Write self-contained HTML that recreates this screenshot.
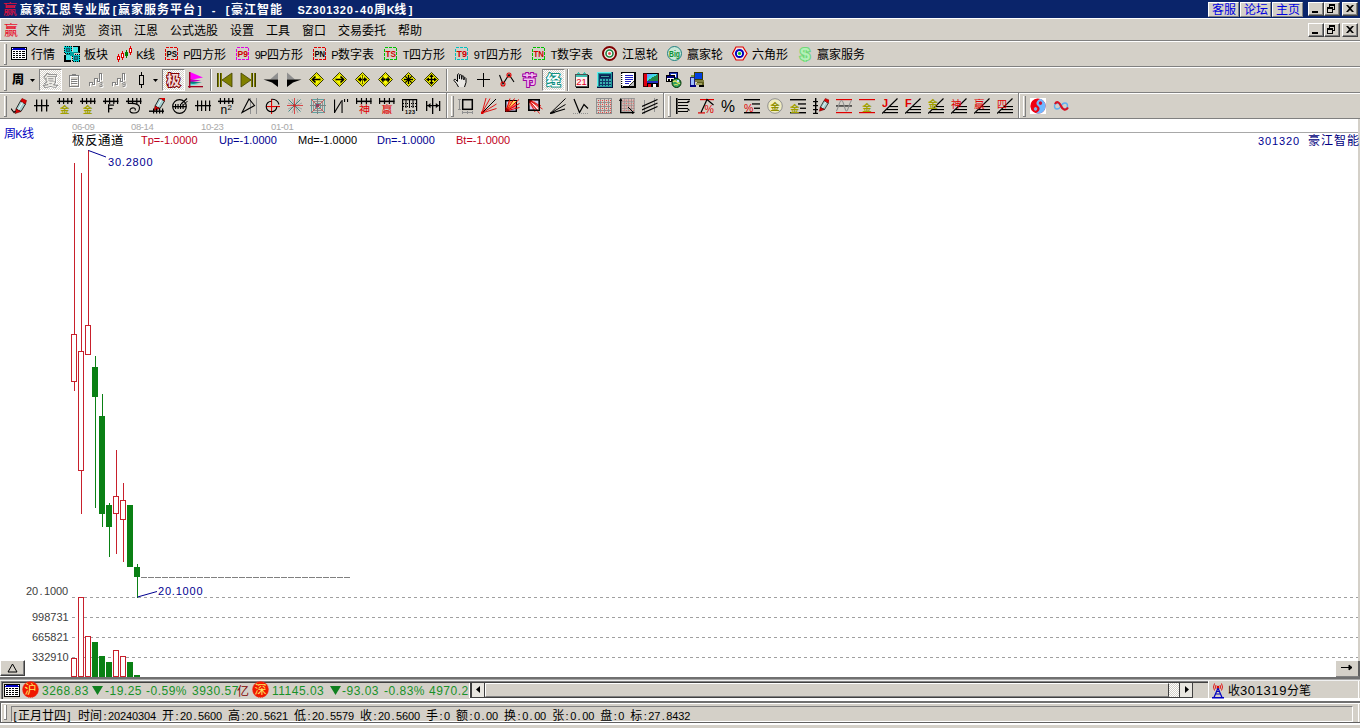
<!DOCTYPE html>
<html lang="zh"><head><meta charset="utf-8"><title>赢家江恩专业版</title>
<style>
html,body{margin:0;padding:0}
body{width:1360px;height:728px;overflow:hidden;position:relative;background:#d4d0c8;
 font-family:"Liberation Sans","Noto Sans CJK SC",sans-serif;font-size:12px;line-height:12px;color:#000}
div,span,svg{position:absolute;box-sizing:border-box}
.t{white-space:pre;height:14px;line-height:14px}
.t span{position:static}
.d{font-size:11px;letter-spacing:-0.12px}
.n{font-size:11px}
.db{font-size:11px;letter-spacing:0.88px}
.t span.s{display:inline-block;width:6px;text-align:center;font-size:11px}
.t span.sb{display:inline-block;width:7px;text-align:center;font-size:11px}
.cb{letter-spacing:1px}
.b{font-weight:bold}
.hl{background:#fff}.sh{background:#808080}.dk{background:#404040}
.btn{background:#d4d0c8;border:1px solid;border-color:#fff #404040 #404040 #fff;box-shadow:inset -1px -1px 0 #808080}
.sunk{border:1px solid;border-color:#808080 #fff #fff #808080}
.chk{background-color:#fff;background-image:linear-gradient(45deg,#d4d0c8 25%,transparent 25%,transparent 75%,#d4d0c8 75%),linear-gradient(45deg,#d4d0c8 25%,transparent 25%,transparent 75%,#d4d0c8 75%);background-size:2px 2px;background-position:0 0,1px 1px;border:1px solid;border-color:#808080 #fff #fff #808080}
</style></head>
<body>
<div style="left:0px;top:0px;width:1360px;height:18px;background:#0a246a;"></div>
<div class="t" style="left:3px;top:2px;color:#e0103c;font-size:14px;width:14px">赢</div>
<div class="t b" style="left:20px;top:3px;color:#fff;"><span class="cb">赢家江恩专业版</span><span class="sb">[</span><span class="cb">赢家服务平台</span><span class="sb">]</span><span class="sb"> </span><span class="sb">-</span><span class="sb"> </span><span class="sb">[</span><span class="cb">豪江智能</span><span class="sb"> </span><span class="sb"> </span><span class="n" style="letter-spacing:0.66px;margin:0 -0.33px 0 0.33px">SZ301320</span><span class="sb">-</span><span class="db">40</span><span class="cb">周</span><span class="n" style="letter-spacing:-0.94px;margin:0 0.47px 0 -0.47px">K</span><span class="cb">线</span><span class="sb">]</span></div>
<div style="left:1208px;top:2px;width:31px;height:15px;background:#d4d0c8;border:1px solid;border-color:#fff #808080 #808080 #fff"></div>
<div class="t" style="left:1212px;top:3px;color:#0000e0;">客服</div>
<div style="left:1240px;top:2px;width:31px;height:15px;background:#d4d0c8;border:1px solid;border-color:#fff #808080 #808080 #fff"></div>
<div class="t" style="left:1244px;top:3px;color:#0000e0;">论坛</div>
<div style="left:1272px;top:2px;width:31px;height:15px;background:#d4d0c8;border:1px solid;border-color:#fff #808080 #808080 #fff"></div>
<div class="t" style="left:1276px;top:3px;color:#0000e0;">主页</div>
<div class="btn" style="left:1308px;top:2px;width:16px;height:14px"><div style="left:3px;top:8px;width:6px;height:2px;background:#000"></div></div>
<div class="btn" style="left:1324px;top:2px;width:16px;height:14px"><div style="left:4px;top:1px;width:6px;height:6px;border:1px solid #000;border-top-width:2px"></div><div style="left:2px;top:4px;width:6px;height:6px;border:1px solid #000;border-top-width:2px;background:#d4d0c8"></div></div>
<div class="btn" style="left:1342px;top:2px;width:16px;height:14px"><svg style="left:3px;top:2px" width="8" height="7" viewBox="0 0 8 7"><path d="M0 0h2l2 2 2-2h2l-3 3.5 3 3.5h-2l-2-2-2 2h-2l3-3.5z" fill="#000"/></svg></div>
<div style="left:0px;top:18px;width:1360px;height:1px;background:#fff;"></div>
<div style="left:0px;top:19px;width:1px;height:22px;background:#fff;"></div>
<div class="t" style="left:4px;top:22px;color:#e8102c;font-size:14px;width:14px;height:16px;line-height:16px">赢</div>
<div class="t" style="left:26px;top:24px;color:#000;">文件</div>
<div class="t" style="left:62px;top:24px;color:#000;">浏览</div>
<div class="t" style="left:98px;top:24px;color:#000;">资讯</div>
<div class="t" style="left:134px;top:24px;color:#000;">江恩</div>
<div class="t" style="left:170px;top:24px;color:#000;">公式选股</div>
<div class="t" style="left:230px;top:24px;color:#000;">设置</div>
<div class="t" style="left:266px;top:24px;color:#000;">工具</div>
<div class="t" style="left:302px;top:24px;color:#000;">窗口</div>
<div class="t" style="left:338px;top:24px;color:#000;">交易委托</div>
<div class="t" style="left:398px;top:24px;color:#000;">帮助</div>
<div class="btn" style="left:1308px;top:23px;width:16px;height:14px"><div style="left:3px;top:8px;width:6px;height:2px;background:#000"></div></div>
<div class="btn" style="left:1324px;top:23px;width:16px;height:14px"><div style="left:4px;top:1px;width:6px;height:6px;border:1px solid #000;border-top-width:2px"></div><div style="left:2px;top:4px;width:6px;height:6px;border:1px solid #000;border-top-width:2px;background:#d4d0c8"></div></div>
<div class="btn" style="left:1342px;top:23px;width:16px;height:14px"><svg style="left:3px;top:2px" width="8" height="7" viewBox="0 0 8 7"><path d="M0 0h2l2 2 2-2h2l-3 3.5 3 3.5h-2l-2-2-2 2h-2l3-3.5z" fill="#000"/></svg></div>
<div style="left:0px;top:40px;width:1360px;height:1px;background:#808080;"></div>
<div style="left:0px;top:41px;width:1360px;height:1px;background:#fff;"></div>
<div style="left:0px;top:66px;width:1360px;height:1px;background:#808080;"></div>
<div style="left:0px;top:67px;width:1360px;height:1px;background:#fff;"></div>
<div style="left:0px;top:92px;width:1360px;height:1px;background:#808080;"></div>
<div style="left:0px;top:93px;width:1360px;height:1px;background:#fff;"></div>
<div style="left:0px;top:118px;width:1360px;height:1px;background:#808080;"></div>
<div style="left:4px;top:44px;width:1px;height:20px;background:#fff;"></div>
<div style="left:5px;top:44px;width:1px;height:20px;background:#d4d0c8;"></div>
<div style="left:6px;top:44px;width:1px;height:20px;background:#808080;"></div>
<div style="left:4px;top:64px;width:3px;height:1px;background:#808080;"></div>
<svg style="left:11px;top:46px" width="16" height="16" viewBox="0 0 16 16" shape-rendering="crispEdges"><rect x="0.5" y="1.5" width="15" height="12" fill="#fff" stroke="#000" stroke-width="1" /><rect x="1" y="2" width="14" height="2" fill="#0000c0"/><rect x="1" y="2" width="1" height="1" fill="#fff"/><rect x="14" y="2" width="1" height="1" fill="#fff"/><rect x="2" y="5" width="2" height="1" fill="#000"/><rect x="5" y="5" width="2" height="1" fill="#000"/><rect x="8" y="5" width="2" height="1" fill="#000"/><rect x="11" y="5" width="3" height="1" fill="#000"/><rect x="2" y="7" width="2" height="1" fill="#000"/><rect x="5" y="7" width="2" height="1" fill="#000"/><rect x="8" y="7" width="2" height="1" fill="#000"/><rect x="11" y="7" width="3" height="1" fill="#000"/><rect x="2" y="9" width="2" height="1" fill="#000"/><rect x="5" y="9" width="2" height="1" fill="#000"/><rect x="8" y="9" width="2" height="1" fill="#000"/><rect x="11" y="9" width="3" height="1" fill="#000"/><rect x="2" y="11" width="2" height="1" fill="#000"/><rect x="5" y="11" width="2" height="1" fill="#000"/><rect x="8" y="11" width="2" height="1" fill="#000"/><rect x="11" y="11" width="3" height="1" fill="#000"/></svg>
<div class="t" style="left:31px;top:48px;color:#000;">行情</div>
<svg style="left:64px;top:46px" width="16" height="16" viewBox="0 0 16 16" shape-rendering="crispEdges"><rect x="0" y="0" width="16" height="16" fill="#00d8d8"/><rect x="7" y="0" width="2" height="16" fill="#d4d0c8"/><rect x="0" y="7" width="16" height="2" fill="#d4d0c8"/><rect x="0.5" y="0.5" width="7" height="7" fill="#00c8c8" stroke="#000" stroke-width="1" stroke-dasharray="1 1"/><rect x="2.5" y="2.5" width="3" height="3" fill="#208890" stroke="#106070" stroke-width="1" /><rect x="8.5" y="8.5" width="7" height="7" fill="#00c8c8" stroke="#000" stroke-width="1" stroke-dasharray="1 1"/><rect x="10.5" y="10.5" width="3" height="3" fill="#208890" stroke="#106070" stroke-width="1" /><rect x="9" y="1" width="5" height="5" fill="#40e8e8"/><rect x="9" y="0" width="7" height="1" fill="#000"/><rect x="14" y="0" width="2" height="7" fill="#000"/><rect x="9" y="6" width="6" height="1" fill="#008080"/><rect x="2" y="9" width="5" height="5" fill="#40e8e8"/><rect x="0" y="9" width="2" height="7" fill="#000"/><rect x="0" y="14" width="7" height="2" fill="#000"/><rect x="2" y="8" width="5" height="1" fill="#008080"/><rect x="6" y="6" width="4" height="4" fill="#00a0a0"/></svg>
<div class="t" style="left:84px;top:48px;color:#000;">板块</div>
<svg style="left:116px;top:46px" width="16" height="16" viewBox="0 0 16 16" shape-rendering="crispEdges"><rect x="2" y="8" width="1" height="8" fill="#e00000"/><rect x="1.5" y="10.5" width="2" height="3" fill="#fff" stroke="#e00000" stroke-width="1" /><rect x="6" y="5" width="1" height="9" fill="#e00000"/><rect x="5.5" y="7.5" width="2" height="4" fill="#fff" stroke="#e00000" stroke-width="1" /><rect x="10" y="4" width="1" height="8" fill="#008000"/><rect x="9" y="6" width="3" height="4" fill="#008000"/><rect x="14" y="0" width="1" height="9" fill="#e00000"/><rect x="13.5" y="2.5" width="2" height="4" fill="#fff" stroke="#e00000" stroke-width="1" /></svg>
<div class="t" style="left:137px;top:48px;color:#000;"><span class="n" style="letter-spacing:-1.34px;margin:0 0.67px 0 -0.67px">K</span>线</div>
<svg style="left:164px;top:46px" width="16" height="16" viewBox="0 0 16 16" shape-rendering="crispEdges"><rect x="1.5" y="1.5" width="12" height="12" fill="none" stroke="#e00000" stroke-dasharray="3 1"/><text x="2.5" y="11" fill="#000" font-size="9" font-family="Liberation Sans,Noto Sans CJK SC,sans-serif" font-weight="bold" textLength="10.5" lengthAdjust="spacingAndGlyphs" shape-rendering="geometricPrecision">PS</text></svg>
<div class="t" style="left:184px;top:48px;color:#000;"><span class="n" style="letter-spacing:-1.34px;margin:0 0.67px 0 -0.67px">P</span>四方形</div>
<svg style="left:235px;top:46px" width="16" height="16" viewBox="0 0 16 16" shape-rendering="crispEdges"><rect x="1.5" y="1.5" width="12" height="12" fill="none" stroke="#e000e0" stroke-dasharray="3 1"/><text x="2.5" y="11" fill="#d00000" font-size="9" font-family="Liberation Sans,Noto Sans CJK SC,sans-serif" font-weight="bold" textLength="10.5" lengthAdjust="spacingAndGlyphs" shape-rendering="geometricPrecision">P9</text></svg>
<div class="t" style="left:255px;top:48px;color:#000;"><span class="n" style="letter-spacing:-0.73px;margin:0 0.36px 0 -0.36px">9P</span>四方形</div>
<svg style="left:312px;top:46px" width="16" height="16" viewBox="0 0 16 16" shape-rendering="crispEdges"><rect x="1.5" y="1.5" width="12" height="12" fill="none" stroke="#e00000" stroke-dasharray="3 1"/><text x="2.5" y="11" fill="#000" font-size="9" font-family="Liberation Sans,Noto Sans CJK SC,sans-serif" font-weight="bold" textLength="10.5" lengthAdjust="spacingAndGlyphs" shape-rendering="geometricPrecision">PN</text></svg>
<div class="t" style="left:332px;top:48px;color:#000;"><span class="n" style="letter-spacing:-1.34px;margin:0 0.67px 0 -0.67px">P</span>数字表</div>
<svg style="left:383px;top:46px" width="16" height="16" viewBox="0 0 16 16" shape-rendering="crispEdges"><rect x="1.5" y="1.5" width="12" height="12" fill="none" stroke="#00c000" stroke-dasharray="3 1"/><text x="2.5" y="11" fill="#d00000" font-size="9" font-family="Liberation Sans,Noto Sans CJK SC,sans-serif" font-weight="bold" textLength="10.5" lengthAdjust="spacingAndGlyphs" shape-rendering="geometricPrecision">TS</text></svg>
<div class="t" style="left:403px;top:48px;color:#000;"><span class="n" style="letter-spacing:-0.72px;margin:0 0.36px 0 -0.36px">T</span>四方形</div>
<svg style="left:454px;top:46px" width="16" height="16" viewBox="0 0 16 16" shape-rendering="crispEdges"><rect x="1.5" y="1.5" width="12" height="12" fill="none" stroke="#00c0c0" stroke-dasharray="3 1"/><text x="2.5" y="11" fill="#d00000" font-size="9" font-family="Liberation Sans,Noto Sans CJK SC,sans-serif" font-weight="bold" textLength="10.5" lengthAdjust="spacingAndGlyphs" shape-rendering="geometricPrecision">T9</text></svg>
<div class="t" style="left:474px;top:48px;color:#000;"><span class="n" style="letter-spacing:-0.42px;margin:0 0.21px 0 -0.21px">9T</span>四方形</div>
<svg style="left:531px;top:46px" width="16" height="16" viewBox="0 0 16 16" shape-rendering="crispEdges"><rect x="1.5" y="1.5" width="12" height="12" fill="none" stroke="#00c000" stroke-dasharray="3 1"/><text x="2.5" y="11" fill="#d00000" font-size="9" font-family="Liberation Sans,Noto Sans CJK SC,sans-serif" font-weight="bold" textLength="10.5" lengthAdjust="spacingAndGlyphs" shape-rendering="geometricPrecision">TN</text></svg>
<div class="t" style="left:551px;top:48px;color:#000;"><span class="n" style="letter-spacing:-0.72px;margin:0 0.36px 0 -0.36px">T</span>数字表</div>
<svg style="left:602px;top:46px" width="16" height="16" viewBox="0 0 16 16"><circle cx="7.5" cy="7.5" r="6.5" fill="#f4f0ec" stroke="#800000" stroke-width="2"/><circle cx="7.5" cy="7.5" r="3.5" fill="#fff" stroke="#208040" stroke-width="1.6"/><circle cx="7.5" cy="7.5" r="1.2" fill="#e04040" stroke="#e04040" stroke-width="0.5"/></svg>
<div class="t" style="left:622px;top:48px;color:#000;">江恩轮</div>
<svg style="left:667px;top:46px" width="16" height="16" viewBox="0 0 16 16"><circle cx="7.5" cy="7.5" r="7" fill="#c8e8d8" stroke="#208080" stroke-width="1"/><text x="2" y="11" fill="#109030" font-size="8.5" font-family="Liberation Sans,Noto Sans CJK SC,sans-serif" font-weight="bold" textLength="11" lengthAdjust="spacingAndGlyphs">Big</text></svg>
<div class="t" style="left:687px;top:48px;color:#000;">赢家轮</div>
<svg style="left:732px;top:46px" width="16" height="16" viewBox="0 0 16 16"><polygon points="4,1 11,1 15,7.5 11,14 4,14 0.5,7.5" fill="#f0e8e8" stroke="#e00000" stroke-width="1.2" /><circle cx="7.5" cy="7.5" r="3.6" fill="#fff" stroke="#0000c0" stroke-width="2"/><circle cx="7.5" cy="7.5" r="1.3" fill="#00c000" stroke="#00a000" stroke-width="0.5"/></svg>
<div class="t" style="left:752px;top:48px;color:#000;">六角形</div>
<svg style="left:797px;top:46px" width="16" height="16" viewBox="0 0 16 16"><text x="3" y="14" font-size="17" font-weight="bold" font-family="Liberation Sans,sans-serif" fill="#b4f0b8" stroke="#70d878" stroke-width="2.2" paint-order="stroke" textLength="10" lengthAdjust="spacingAndGlyphs">$</text></svg>
<div class="t" style="left:817px;top:48px;color:#000;">赢家服务</div>
<div style="left:4px;top:70px;width:1px;height:20px;background:#fff;"></div>
<div style="left:5px;top:70px;width:1px;height:20px;background:#d4d0c8;"></div>
<div style="left:6px;top:70px;width:1px;height:20px;background:#808080;"></div>
<div style="left:4px;top:90px;width:3px;height:1px;background:#808080;"></div>
<div class="t" style="left:12px;top:73px;font-weight:900;font-size:12px">周</div>
<svg style="left:30px;top:79px" width="5" height="3" viewBox="0 0 5 3"><path d="M0 0h5l-2.5 3z" fill="#000"/></svg>
<div class="chk" style="left:39px;top:69px;width:23px;height:22px"></div>
<div class="chk" style="left:162px;top:69px;width:23px;height:22px"></div>
<div class="chk" style="left:542px;top:69px;width:23px;height:22px"></div>
<svg style="left:43px;top:72px" width="16" height="16" viewBox="0 0 16 16"><g style="filter:drop-shadow(1px 1px 0 #fff)"><text x="1" y="12.5" font-size="13" font-weight="bold" font-family="Liberation Sans,Noto Sans CJK SC,sans-serif" fill="#f0eee8" stroke="#808080" stroke-width="1.6" paint-order="stroke">复</text></g></svg>
<svg style="left:66px;top:72px" width="16" height="16" viewBox="0 0 16 16" shape-rendering="crispEdges"><g transform="translate(1,1)"><rect x="3.5" y="3.5" width="9" height="11" fill="none" stroke="#fff" stroke-width="1" /><rect x="6" y="2" width="4" height="2" fill="#fff"/><rect x="5" y="7" width="6" height="1" fill="#fff"/><rect x="5" y="9" width="6" height="1" fill="#fff"/><rect x="5" y="11" width="6" height="1" fill="#fff"/></g><g transform="translate(0,0)"><rect x="3.5" y="3.5" width="9" height="11" fill="none" stroke="#808080" stroke-width="1" /><rect x="6" y="2" width="4" height="2" fill="#808080"/><rect x="5" y="7" width="6" height="1" fill="#808080"/><rect x="5" y="9" width="6" height="1" fill="#808080"/><rect x="5" y="11" width="6" height="1" fill="#808080"/></g></svg>
<svg style="left:89px;top:72px" width="16" height="16" viewBox="0 0 16 16" shape-rendering="crispEdges"><g style="filter:drop-shadow(1px 1px 0 #fff)"><polyline points="0.5,14 0.5,10.5 3.5,10.5 3.5,12.5 5.5,12.5 5.5,6.5 8.5,6.5 8.5,9.5 10.5,9.5 10.5,1.5 12.5,1.5 12.5,8" fill="none" stroke="#808080" stroke-width="1" /><text x="10" y="15" fill="#808080" font-size="7" font-family="Liberation Sans,Noto Sans CJK SC,sans-serif" font-weight="bold" shape-rendering="geometricPrecision">3</text></g></svg>
<svg style="left:112px;top:72px" width="16" height="16" viewBox="0 0 16 16" shape-rendering="crispEdges"><g style="filter:drop-shadow(1px 1px 0 #fff)"><polyline points="0.5,14 0.5,10.5 3.5,10.5 3.5,12.5 5.5,12.5 5.5,6.5 8.5,6.5 8.5,9.5 10.5,9.5 10.5,1.5 12.5,1.5 12.5,8" fill="none" stroke="#808080" stroke-width="1" /><text x="10" y="15" fill="#808080" font-size="7" font-family="Liberation Sans,Noto Sans CJK SC,sans-serif" font-weight="bold" shape-rendering="geometricPrecision">9</text></g></svg>
<svg style="left:135px;top:72px" width="16" height="16" viewBox="0 0 16 16" shape-rendering="crispEdges"><rect x="6" y="0" width="1" height="3" fill="#000"/><rect x="4.5" y="3.5" width="4" height="9" fill="none" stroke="#000" stroke-width="1" /><rect x="4.5" y="3.5" width="4" height="9" fill="none" stroke="#000" stroke-width="1" /><rect x="6" y="13" width="1" height="3" fill="#000"/><rect x="5" y="3" width="1" height="1" fill="#000"/></svg>
<svg style="left:166px;top:72px" width="16" height="16" viewBox="0 0 16 16"><text x="0.5" y="13" font-size="14" font-weight="bold" font-family="Liberation Sans,Noto Sans CJK SC,sans-serif" fill="#f4dcdc" stroke="#800000" stroke-width="2" paint-order="stroke">极</text></svg>
<svg style="left:188px;top:72px" width="16" height="16" viewBox="0 0 16 16"><polygon points="2,0 15,5.5 2,8" fill="#ff00ff" stroke="none" stroke-width="1" /><polygon points="2,7 13,8.5 2,10.5" fill="#c000c0" stroke="none" stroke-width="1" /><polygon points="2,9.5 14,10.5 2,12.5" fill="#008080" stroke="none" stroke-width="1" /><polygon points="2,11.5 11,12.5 2,13.5" fill="#60e0e0" stroke="none" stroke-width="1" /><rect x="1" y="0" width="1.4" height="16" fill="#a00020"/><rect x="0" y="14" width="15" height="1.3" fill="#a00020"/></svg>
<svg style="left:217px;top:72px" width="16" height="16" viewBox="0 0 16 16" shape-rendering="crispEdges"><rect x="0" y="1" width="2" height="14" fill="#808000"/><rect x="0" y="1" width="1" height="14" fill="#404000"/><rect x="3" y="1" width="2" height="14" fill="#808000"/><rect x="3" y="1" width="1" height="14" fill="#404000"/><polygon points="15,1 15,15 5,8" fill="#808000" stroke="#404000" stroke-width="0.8" shape-rendering="geometricPrecision"/></svg>
<svg style="left:240px;top:72px" width="16" height="16" viewBox="0 0 16 16" shape-rendering="crispEdges"><rect x="14" y="1" width="2" height="14" fill="#808000"/><rect x="15" y="1" width="1" height="14" fill="#404000"/><rect x="11" y="1" width="2" height="14" fill="#808000"/><rect x="12" y="1" width="1" height="14" fill="#404000"/><polygon points="1,1 1,15 11,8" fill="#808000" stroke="#404000" stroke-width="0.8" shape-rendering="geometricPrecision"/></svg>
<svg style="left:263px;top:72px" width="16" height="16" viewBox="0 0 16 16"><polygon points="7,7.5 15,0.5 15,7.5" fill="#909090" stroke="none" stroke-width="1" /><polygon points="0.5,7.5 15,7.5 15,15 9,10.5" fill="#000" stroke="none" stroke-width="1" /></svg>
<svg style="left:286px;top:72px" width="16" height="16" viewBox="0 0 16 16"><polygon points="9,7.5 1,0.5 1,7.5" fill="#909090" stroke="none" stroke-width="1" /><polygon points="15.5,7.5 1,7.5 1,15 7,10.5" fill="#000" stroke="none" stroke-width="1" /></svg>
<svg style="left:309px;top:72px" width="16" height="16" viewBox="0 0 16 16"><polygon points="7.5,0.5 14.5,7.5 7.5,14.5 0.5,7.5" fill="#ffff00" stroke="#303000" stroke-width="1" /><polygon points="7.5,2.2 12.8,7.5 7.5,12.8 2.2,7.5" fill="none" stroke="#808000" stroke-width="0.5" /><line x1="3.5" y1="7.5" x2="11.5" y2="7.5" stroke="#000" stroke-width="1.6" /><polyline points="6.5,4.5 3.5,7.5 6.5,10.5" fill="none" stroke="#000" stroke-width="1.6" /></svg>
<svg style="left:332px;top:72px" width="16" height="16" viewBox="0 0 16 16"><polygon points="7.5,0.5 14.5,7.5 7.5,14.5 0.5,7.5" fill="#ffff00" stroke="#303000" stroke-width="1" /><polygon points="7.5,2.2 12.8,7.5 7.5,12.8 2.2,7.5" fill="none" stroke="#808000" stroke-width="0.5" /><line x1="3.5" y1="7.5" x2="11.5" y2="7.5" stroke="#000" stroke-width="1.6" /><polyline points="8.5,4.5 11.5,7.5 8.5,10.5" fill="none" stroke="#000" stroke-width="1.6" /></svg>
<svg style="left:355px;top:72px" width="16" height="16" viewBox="0 0 16 16"><polygon points="7.5,0.5 14.5,7.5 7.5,14.5 0.5,7.5" fill="#ffff00" stroke="#303000" stroke-width="1" /><polygon points="7.5,2.2 12.8,7.5 7.5,12.8 2.2,7.5" fill="none" stroke="#808000" stroke-width="0.5" /><line x1="3.5" y1="7.5" x2="11.5" y2="7.5" stroke="#000" stroke-width="1.6" /><polygon points="3,7.5 6,5 6,10" fill="#000" stroke="none" stroke-width="1" /><polygon points="12,7.5 9,5 9,10" fill="#000" stroke="none" stroke-width="1" /><rect x="7" y="3" width="1" height="9" fill="#606000"/></svg>
<svg style="left:378px;top:72px" width="16" height="16" viewBox="0 0 16 16"><polygon points="7.5,0.5 14.5,7.5 7.5,14.5 0.5,7.5" fill="#ffff00" stroke="#303000" stroke-width="1" /><polygon points="7.5,2.2 12.8,7.5 7.5,12.8 2.2,7.5" fill="none" stroke="#808000" stroke-width="0.5" /><line x1="3" y1="7.5" x2="12" y2="7.5" stroke="#000" stroke-width="1.6" /><polygon points="7,7.5 4,5 4,10" fill="#000" stroke="none" stroke-width="1" /><polygon points="8,7.5 11,5 11,10" fill="#000" stroke="none" stroke-width="1" /><line x1="4.5" y1="4.5" x2="10.5" y2="10.5" stroke="#404000" stroke-width="0.8" /><line x1="10.5" y1="4.5" x2="4.5" y2="10.5" stroke="#404000" stroke-width="0.8" /></svg>
<svg style="left:401px;top:72px" width="16" height="16" viewBox="0 0 16 16"><polygon points="7.5,0.5 14.5,7.5 7.5,14.5 0.5,7.5" fill="#ffff00" stroke="#303000" stroke-width="1" /><polygon points="7.5,2.2 12.8,7.5 7.5,12.8 2.2,7.5" fill="none" stroke="#808000" stroke-width="0.5" /><line x1="3" y1="7.5" x2="12" y2="7.5" stroke="#000" stroke-width="1.4" /><line x1="7.5" y1="3" x2="7.5" y2="12" stroke="#000" stroke-width="1.4" /><line x1="4.3" y1="4.3" x2="10.7" y2="10.7" stroke="#000" stroke-width="1.2" /><line x1="10.7" y1="4.3" x2="4.3" y2="10.7" stroke="#000" stroke-width="1.2" /></svg>
<svg style="left:424px;top:72px" width="16" height="16" viewBox="0 0 16 16"><polygon points="7.5,0.5 14.5,7.5 7.5,14.5 0.5,7.5" fill="#ffff00" stroke="#303000" stroke-width="1" /><polygon points="7.5,2.2 12.8,7.5 7.5,12.8 2.2,7.5" fill="none" stroke="#808000" stroke-width="0.5" /><line x1="3.5" y1="7.5" x2="11.5" y2="7.5" stroke="#000" stroke-width="1.4" /><line x1="7.5" y1="3.5" x2="7.5" y2="11.5" stroke="#000" stroke-width="1.4" /><polygon points="7.5,2 5.3,5 9.7,5" fill="#000" stroke="none" stroke-width="1" /><polygon points="7.5,13 5.3,10 9.7,10" fill="#000" stroke="none" stroke-width="1" /><polygon points="2,7.5 5,5.5 5,9.5" fill="#000" stroke="none" stroke-width="1" /><polygon points="13,7.5 10,5.5 10,9.5" fill="#000" stroke="none" stroke-width="1" /></svg>
<svg style="left:453px;top:72px" width="16" height="16" viewBox="0 0 16 16"><path d="M5.5 15 L3.5 11.5 L1 8.5 Q0.8 7 2.3 7.3 L4.5 9.5 L4.5 2.5 Q5.3 1 6.3 2.5 L6.5 7 L6.7 3.2 Q7.6 2 8.6 3.2 L8.7 7.3 L9 4.2 Q10 3.2 10.8 4.4 L10.9 8 L11.3 5.8 Q12.4 5.2 13 6.5 L13 10.5 L11.5 15" fill="#fff" fill-opacity="0.5" stroke="#000" stroke-width="1"/></svg>
<svg style="left:476px;top:72px" width="16" height="16" viewBox="0 0 16 16" shape-rendering="crispEdges"><rect x="7" y="1" width="1" height="14" fill="#000"/><rect x="1" y="7" width="13" height="1" fill="#000"/></svg>
<svg style="left:499px;top:72px" width="16" height="16" viewBox="0 0 16 16"><polyline points="0.5,3 4,12 10,2.5 15,10" fill="none" stroke="#000" stroke-width="1.1" /><circle cx="4" cy="12" r="2" fill="none" stroke="#e00000" stroke-width="1.1"/><circle cx="10" cy="3" r="2" fill="none" stroke="#e00000" stroke-width="1.1"/></svg>
<svg style="left:522px;top:72px" width="16" height="16" viewBox="0 0 16 16"><text x="0.5" y="13" font-size="14" font-weight="bold" font-family="Liberation Sans,Noto Sans CJK SC,sans-serif" fill="#f0c0f0" stroke="#a000a0" stroke-width="2" paint-order="stroke">节</text></svg>
<svg style="left:546px;top:72px" width="16" height="16" viewBox="0 0 16 16"><text x="0.5" y="13" font-size="14" font-weight="bold" font-family="Liberation Sans,Noto Sans CJK SC,sans-serif" fill="#fff" stroke="#109080" stroke-width="2" paint-order="stroke">经</text></svg>
<svg style="left:574px;top:72px" width="16" height="16" viewBox="0 0 16 16" shape-rendering="crispEdges"><rect x="2" y="3" width="13" height="13" fill="#000"/><rect x="1" y="2" width="13" height="13" fill="#fff0f0"/><rect x="1" y="2" width="13" height="3" fill="#40c0b0"/><polygon points="2,2 4,0 6,2" fill="#40c0b0" stroke="none" stroke-width="1" /><polygon points="8,2 10,0 12,2" fill="#40c0b0" stroke="none" stroke-width="1" /><rect x="1.5" y="2.5" width="12" height="12" fill="none" stroke="#505050" stroke-width="1" /><text x="2.2" y="12.5" fill="#e00020" font-size="9" font-family="Liberation Sans,Noto Sans CJK SC,sans-serif" textLength="10.5" lengthAdjust="spacingAndGlyphs" shape-rendering="geometricPrecision">21</text></svg>
<svg style="left:597px;top:72px" width="16" height="16" viewBox="0 0 16 16" shape-rendering="crispEdges"><rect x="0" y="0" width="16" height="16" fill="#001040"/><rect x="0" y="0" width="15" height="15" fill="#209898"/><rect x="0" y="0" width="14" height="1" fill="#60f0f0"/><rect x="0" y="0" width="1" height="14" fill="#60f0f0"/><rect x="2" y="2" width="12" height="12" fill="#103868"/><rect x="3" y="3" width="10" height="3" fill="#0a2050"/><rect x="4" y="4" width="8" height="1" fill="#40a0a0"/><rect x="3" y="7" width="2" height="1.5" fill="#38b0b0"/><rect x="6" y="7" width="2" height="1.5" fill="#38b0b0"/><rect x="9" y="7" width="2" height="1.5" fill="#38b0b0"/><rect x="12" y="7" width="2" height="1.5" fill="#38b0b0"/><rect x="3" y="10" width="2" height="1.5" fill="#38b0b0"/><rect x="6" y="10" width="2" height="1.5" fill="#38b0b0"/><rect x="9" y="10" width="2" height="1.5" fill="#38b0b0"/><rect x="12" y="10" width="2" height="1.5" fill="#38b0b0"/><rect x="3" y="12.5" width="2" height="1.5" fill="#38b0b0"/><rect x="6" y="12.5" width="2" height="1.5" fill="#38b0b0"/><rect x="9" y="12.5" width="2" height="1.5" fill="#38b0b0"/><rect x="12" y="12.5" width="2" height="1.5" fill="#38b0b0"/></svg>
<svg style="left:620px;top:72px" width="16" height="16" viewBox="0 0 16 16" shape-rendering="crispEdges"><rect x="1" y="0" width="15" height="16" fill="#000"/><rect x="3" y="1" width="11" height="13" fill="#fff"/><rect x="2" y="1" width="1" height="14" fill="#c0c0c0"/><rect x="1" y="2" width="2" height="1" fill="#fff"/><rect x="1" y="4" width="2" height="1" fill="#fff"/><rect x="1" y="6" width="2" height="1" fill="#fff"/><rect x="1" y="8" width="2" height="1" fill="#fff"/><rect x="1" y="10" width="2" height="1" fill="#fff"/><rect x="1" y="12" width="2" height="1" fill="#fff"/><rect x="5" y="3" width="8" height="1" fill="#2020c0"/><rect x="5" y="5" width="8" height="1" fill="#2020c0"/><rect x="5" y="7" width="8" height="1" fill="#2020c0"/><rect x="5" y="9" width="6" height="1" fill="#2020c0"/><rect x="5" y="11" width="4" height="1" fill="#2020c0"/><polygon points="9,14 14,9 14,14" fill="#c0c0c0" stroke="#000" stroke-width="0.8" /></svg>
<svg style="left:643px;top:72px" width="16" height="16" viewBox="0 0 16 16" shape-rendering="crispEdges"><rect x="0" y="1" width="16" height="14" fill="#400000"/><rect x="0.6" y="1.6" width="14.8" height="12.8" fill="#e00010"/><rect x="4" y="1" width="11" height="8" fill="#40d8e8"/><polygon points="4,9 15,2 15,9" fill="#208848" stroke="none" stroke-width="1" /><polygon points="4,1 11,1 4,6" fill="#60a0ff" stroke="none" stroke-width="1" /><rect x="4" y="9" width="11" height="2" fill="#2030c0"/><rect x="4" y="11" width="11" height="4" fill="#000"/><rect x="5" y="12" width="3" height="3" fill="#e00010"/><rect x="10" y="12" width="3" height="3" fill="#fff"/><rect x="4" y="1" width="11" height="1" fill="#000"/></svg>
<svg style="left:666px;top:72px" width="16" height="16" viewBox="0 0 16 16"><rect x="3.5" y="0.5" width="8" height="6" fill="#2040c0" stroke="#000040" stroke-width="1" /><rect x="5" y="2" width="5" height="3" fill="#fff"/><rect x="0.5" y="3.5" width="8" height="6" fill="#fff" stroke="#000" stroke-width="1" /><rect x="1" y="4" width="7" height="2" fill="#000080"/><rect x="2" y="7" width="2" height="2" fill="#000"/><rect x="5" y="7" width="2" height="2" fill="#000"/><circle cx="10.5" cy="11" r="4.5" fill="#30a060" stroke="#003000" stroke-width="1"/><path d="M7 10 q2 -2 4 0 t3 1 M8 13 q2 -1 4 0" stroke="#e0e060" fill="none" stroke-width="1.2"/><rect x="11" y="8" width="2" height="2" fill="#c0e0ff"/></svg>
<svg style="left:689px;top:72px" width="16" height="16" viewBox="0 0 16 16" shape-rendering="crispEdges"><rect x="5.5" y="0.5" width="8" height="7" fill="#0040e0" stroke="#404000" stroke-width="1" /><rect x="4" y="8" width="11" height="2" fill="#808040"/><rect x="8" y="10" width="7" height="3" fill="#606020"/><rect x="10" y="13" width="5" height="2" fill="#000"/><rect x="1.5" y="5.5" width="4" height="8" fill="#a0c0ff" stroke="#202080" stroke-width="1" /><rect x="2" y="3" width="3" height="2" fill="#80a040"/><rect x="1" y="13" width="6" height="2" fill="#000080"/><rect x="7" y="11" width="6" height="2" fill="#a0a060"/></svg>
<svg style="left:153px;top:79px" width="5" height="3" viewBox="0 0 5 3"><path d="M0 0h5l-2.5 3z" fill="#000"/></svg>
<div style="left:210px;top:69px;width:1px;height:22px;background:#808080;"></div>
<div style="left:211px;top:69px;width:1px;height:22px;background:#fff;"></div>
<div style="left:446px;top:69px;width:1px;height:22px;background:#808080;"></div>
<div style="left:447px;top:69px;width:1px;height:22px;background:#fff;"></div>
<div style="left:567px;top:69px;width:1px;height:22px;background:#808080;"></div>
<div style="left:568px;top:69px;width:1px;height:22px;background:#fff;"></div>
<div style="left:4px;top:96px;width:1px;height:20px;background:#fff;"></div>
<div style="left:5px;top:96px;width:1px;height:20px;background:#d4d0c8;"></div>
<div style="left:6px;top:96px;width:1px;height:20px;background:#808080;"></div>
<div style="left:4px;top:116px;width:3px;height:1px;background:#808080;"></div>
<svg style="left:11px;top:98px" width="16" height="16" viewBox="0 0 16 16"><g transform="translate(0,0)"><polygon points="5,11 9.5,3 14.5,6 10,13.5" fill="#a8d0d0" stroke="#000" stroke-width="0.8" /><polygon points="9.5,3 11,0.5 15.5,2.5 14.5,6" fill="#e00000" stroke="#800000" stroke-width="0.6" /><polygon points="5,11 10,13.5 4,15.5" fill="#e00000" stroke="#600000" stroke-width="0.6" /><line x1="7.5" y1="11.5" x2="11.5" y2="4.5" stroke="#fff" stroke-width="0.9" /></g><polyline points="0,10.5 3,14.5 4.5,13" fill="none" stroke="#000" stroke-width="1.1" /></svg>
<svg style="left:34px;top:98px" width="16" height="16" viewBox="0 0 16 16"><rect x="0" y="7" width="15" height="1.3" fill="#000"/><rect x="2" y="1.5" width="1.3" height="12" fill="#000"/><rect x="7" y="1.5" width="1.3" height="12" fill="#000"/><rect x="12" y="1.5" width="1.3" height="12" fill="#000"/></svg>
<svg style="left:57px;top:98px" width="16" height="16" viewBox="0 0 16 16"><rect x="0" y="2.6" width="15.5" height="1.5" fill="#000"/><rect x="1.8" y="0" width="1.2" height="6" fill="#000"/><rect x="6" y="0" width="1.2" height="6" fill="#000"/><rect x="10.2" y="0" width="1.2" height="6" fill="#000"/><rect x="14" y="0" width="1.2" height="6" fill="#000"/><text x="3" y="15" fill="#a0a000" font-size="9.5" font-family="Liberation Sans,Noto Sans CJK SC,sans-serif" font-weight="bold">金</text></svg>
<svg style="left:80px;top:98px" width="16" height="16" viewBox="0 0 16 16"><rect x="0" y="2.6" width="15.5" height="1.5" fill="#000"/><rect x="1.8" y="0" width="1.2" height="6" fill="#000"/><rect x="6" y="0" width="1.2" height="6" fill="#000"/><rect x="10.2" y="0" width="1.2" height="6" fill="#000"/><rect x="14" y="0" width="1.2" height="6" fill="#000"/><text x="3" y="15" fill="#a0a000" font-size="9.5" font-family="Liberation Sans,Noto Sans CJK SC,sans-serif" font-weight="bold">金</text></svg>
<svg style="left:103px;top:98px" width="16" height="16" viewBox="0 0 16 16"><rect x="0" y="2.6" width="15.5" height="1.5" fill="#000"/><rect x="1.8" y="0" width="1.2" height="6" fill="#000"/><rect x="6" y="0" width="1.2" height="6" fill="#000"/><rect x="10.2" y="0" width="1.2" height="6" fill="#000"/><rect x="14" y="0" width="1.2" height="6" fill="#000"/><rect x="5" y="6.5" width="1.3" height="8" fill="#000"/><rect x="5" y="6.5" width="6" height="1.2" fill="#000"/><rect x="5" y="10" width="4.5" height="1.2" fill="#000"/></svg>
<svg style="left:126px;top:98px" width="16" height="16" viewBox="0 0 16 16"><rect x="0" y="2.6" width="15.5" height="1.5" fill="#000"/><rect x="1.8" y="0" width="1.2" height="6" fill="#000"/><rect x="6" y="0" width="1.2" height="6" fill="#000"/><rect x="10.2" y="0" width="1.2" height="6" fill="#000"/><rect x="14" y="0" width="1.2" height="6" fill="#000"/><path d="M2 5.5 Q13 4.5 13.5 9.5 Q13.5 15 8 15 Q3.5 15 4 12 Q4.5 9.5 8 10 Q10 10.5 9 12.5" fill="none" stroke="#000" stroke-width="1.1"/></svg>
<svg style="left:149px;top:98px" width="16" height="16" viewBox="0 0 16 16"><g transform="translate(1,-3)"><g transform="translate(0,0)"><polygon points="5,11 9.5,3 14.5,6 10,13.5" fill="#a8d0d0" stroke="#000" stroke-width="0.8" /><polygon points="9.5,3 11,0.5 15.5,2.5 14.5,6" fill="#e00000" stroke="#800000" stroke-width="0.6" /><polygon points="5,11 10,13.5 4,15.5" fill="#e00000" stroke="#600000" stroke-width="0.6" /><line x1="7.5" y1="11.5" x2="11.5" y2="4.5" stroke="#fff" stroke-width="0.9" /></g></g><rect x="0" y="12.5" width="15" height="1.4" fill="#000"/><rect x="4" y="10.5" width="1.2" height="5" fill="#000"/><rect x="7" y="10.5" width="1.2" height="5" fill="#000"/><rect x="10" y="10.5" width="1.2" height="5" fill="#000"/><rect x="13" y="10.5" width="1.2" height="5" fill="#000"/></svg>
<svg style="left:172px;top:98px" width="16" height="16" viewBox="0 0 16 16"><circle cx="7.5" cy="8.5" r="6.8" fill="none" stroke="#000" stroke-width="1.2"/><rect x="1" y="8" width="13" height="1.3" fill="#000"/><rect x="3" y="6" width="1.1" height="5" fill="#000"/><rect x="5.5" y="6" width="1.1" height="5" fill="#000"/><rect x="8" y="6" width="1.1" height="5" fill="#000"/><rect x="10.5" y="6" width="1.1" height="5" fill="#000"/><line x1="9" y1="6" x2="15" y2="0.5" stroke="#000" stroke-width="1.2" /><line x1="11" y1="7.5" x2="15.5" y2="3" stroke="#000" stroke-width="1" /></svg>
<svg style="left:195px;top:98px" width="16" height="16" viewBox="0 0 16 16"><rect x="0" y="7" width="16" height="1.3" fill="#000"/><rect x="2" y="2.5" width="1.2" height="10.5" fill="#000"/><rect x="6" y="2.5" width="1.2" height="10.5" fill="#000"/><rect x="10" y="2.5" width="1.2" height="10.5" fill="#000"/><rect x="14" y="2.5" width="1.2" height="10.5" fill="#000"/></svg>
<svg style="left:218px;top:98px" width="16" height="16" viewBox="0 0 16 16"><rect x="0" y="2.6" width="15.5" height="1.5" fill="#000"/><rect x="1.8" y="0" width="1.2" height="6" fill="#000"/><rect x="6" y="0" width="1.2" height="6" fill="#000"/><rect x="10.2" y="0" width="1.2" height="6" fill="#000"/><rect x="14" y="0" width="1.2" height="6" fill="#000"/><text x="2.5" y="15.5" fill="#000" font-size="12" font-family="Liberation Sans,Noto Sans CJK SC,sans-serif" >n</text><text x="9.5" y="12" fill="#000" font-size="8" font-family="Liberation Sans,Noto Sans CJK SC,sans-serif" >2</text></svg>
<svg style="left:241px;top:98px" width="16" height="16" viewBox="0 0 16 16"><rect x="9" y="0" width="1" height="16" fill="#909090"/><rect x="15" y="0" width="1" height="16" fill="#909090"/><polygon points="1,14.5 8,1 13.5,7.5" fill="none" stroke="#000" stroke-width="1.1" /></svg>
<svg style="left:264px;top:98px" width="16" height="16" viewBox="0 0 16 16"><rect x="7" y="1" width="1.1" height="15" fill="#e00000"/><rect x="2" y="8" width="14" height="1.1" fill="#e00000"/><path d="M12.8 8.5 A5.3 5.3 0 1 1 7.5 3.2" fill="none" stroke="#000" stroke-width="1.1"/><path d="M7.5 1.2 A7.3 7.3 0 0 1 15 6.5" fill="none" stroke="#000" stroke-width="1.1"/></svg>
<svg style="left:287px;top:98px" width="16" height="16" viewBox="0 0 16 16"><line x1="1" y1="5" x2="15" y2="11" stroke="#909090" stroke-width="0.7" /><line x1="1" y1="11" x2="15" y2="5" stroke="#909090" stroke-width="0.7" /><line x1="5" y1="1" x2="11" y2="15" stroke="#909090" stroke-width="0.7" /><line x1="11" y1="1" x2="5" y2="15" stroke="#909090" stroke-width="0.7" /><line x1="1.5" y1="1.5" x2="13.5" y2="13.5" stroke="#408888" stroke-width="1" /><line x1="13.5" y1="1.5" x2="1.5" y2="13.5" stroke="#408888" stroke-width="1" /><line x1="0" y1="7.5" x2="16" y2="7.5" stroke="#d84848" stroke-width="1" /><line x1="7.5" y1="0" x2="7.5" y2="16" stroke="#d84848" stroke-width="1" /><circle cx="7.5" cy="7.5" r="1.2" fill="#c03030" stroke="#c03030" stroke-width="0.5"/></svg>
<svg style="left:310px;top:98px" width="16" height="16" viewBox="0 0 16 16"><rect x="1.5" y="1.5" width="13" height="13" fill="none" stroke="#60a0a0" stroke-width="1" /><rect x="3.5" y="3.5" width="9" height="9" fill="none" stroke="#909090" stroke-width="1" /><rect x="5.5" y="5.5" width="5" height="5" fill="none" stroke="#60a0a0" stroke-width="1" /><line x1="1" y1="1" x2="15" y2="15" stroke="#d05050" stroke-width="0.9" /><line x1="15" y1="1" x2="1" y2="15" stroke="#d05050" stroke-width="0.9" /><line x1="7.5" y1="0" x2="7.5" y2="16" stroke="#808080" stroke-width="1" /><line x1="0" y1="7.5" x2="16" y2="7.5" stroke="#808080" stroke-width="1" /><rect x="6" y="6" width="3" height="3" fill="#904060"/></svg>
<svg style="left:333px;top:98px" width="16" height="16" viewBox="0 0 16 16"><rect x="1" y="1.5" width="1.1" height="13.5" fill="#000"/><line x1="1.5" y1="14.5" x2="8.5" y2="3" stroke="#000" stroke-width="1.1" /><rect x="8.5" y="2" width="1.1" height="13" fill="#000"/><rect x="11" y="1" width="1.1" height="3" fill="#000"/><rect x="14" y="1" width="1.1" height="3" fill="#000"/></svg>
<svg style="left:356px;top:98px" width="16" height="16" viewBox="0 0 16 16"><rect x="0" y="2.6" width="15.5" height="1.5" fill="#000"/><rect x="0" y="0" width="1.2" height="6" fill="#000"/><rect x="4.9" y="0" width="1.2" height="6" fill="#000"/><rect x="9.8" y="0" width="1.2" height="6" fill="#000"/><rect x="14.3" y="0" width="1.2" height="6" fill="#000"/><text x="3" y="15.5" fill="#e00000" font-size="11" font-family="Liberation Sans,Noto Sans CJK SC,sans-serif" >神</text></svg>
<svg style="left:379px;top:98px" width="16" height="16" viewBox="0 0 16 16"><rect x="0" y="2.6" width="15.5" height="1.5" fill="#000"/><rect x="0" y="0" width="1.2" height="6" fill="#000"/><rect x="4.9" y="0" width="1.2" height="6" fill="#000"/><rect x="9.8" y="0" width="1.2" height="6" fill="#000"/><rect x="14.3" y="0" width="1.2" height="6" fill="#000"/><text x="2.5" y="15.5" fill="#e00000" font-size="11" font-family="Liberation Sans,Noto Sans CJK SC,sans-serif" >赢</text></svg>
<svg style="left:402px;top:98px" width="16" height="16" viewBox="0 0 16 16"><rect x="0" y="1" width="15" height="1.3" fill="#000"/><rect x="0" y="1" width="1.2" height="12" fill="#000"/><rect x="14" y="1" width="1.2" height="12" fill="#000"/><rect x="3.5" y="1" width="1" height="9" fill="#000"/><rect x="7" y="1" width="1" height="9" fill="#000"/><rect x="10.5" y="1" width="1" height="9" fill="#000"/><line x1="1" y1="5.5" x2="14" y2="5.5" stroke="#000" stroke-dasharray="1 1"/><line x1="1" y1="8.5" x2="14" y2="8.5" stroke="#000" stroke-dasharray="1 1"/><text x="3" y="15.5" fill="#000" font-size="5.5" font-family="Liberation Sans,Noto Sans CJK SC,sans-serif" font-weight="bold" textLength="10">123</text></svg>
<svg style="left:425px;top:98px" width="16" height="16" viewBox="0 0 16 16"><rect x="1" y="3" width="1.3" height="10" fill="#000"/><rect x="7" y="0" width="1.3" height="16" fill="#000"/><rect x="14" y="3" width="1.3" height="10" fill="#000"/><rect x="2" y="7" width="12" height="1.2" fill="#000"/><polygon points="2.5,7.6 5.5,5 5.5,10.2" fill="#000" stroke="none" stroke-width="1" /><polygon points="13.8,7.6 10.8,5 10.8,10.2" fill="#000" stroke="none" stroke-width="1" /></svg>
<div style="left:446px;top:93px;width:1px;height:25px;background:#808080;"></div>
<div style="left:447px;top:93px;width:1px;height:25px;background:#fff;"></div>
<div style="left:451px;top:96px;width:1px;height:20px;background:#fff;"></div>
<div style="left:452px;top:96px;width:1px;height:20px;background:#d4d0c8;"></div>
<div style="left:453px;top:96px;width:1px;height:20px;background:#808080;"></div>
<div style="left:451px;top:116px;width:3px;height:1px;background:#808080;"></div>
<svg style="left:458px;top:98px" width="16" height="16" viewBox="0 0 16 16" shape-rendering="crispEdges"><rect x="4.7" y="1.7" width="9.6" height="9.6" fill="none" stroke="#000" stroke-width="1.5" shape-rendering="geometricPrecision"/><rect x="1" y="1" width="1" height="11" fill="#909090"/><rect x="0" y="1" width="3" height="1" fill="#909090"/><rect x="0" y="11" width="3" height="1" fill="#909090"/><rect x="4" y="14" width="11" height="1" fill="#909090"/><rect x="4" y="13" width="1" height="3" fill="#909090"/><rect x="14" y="13" width="1" height="3" fill="#909090"/><rect x="9" y="13" width="1" height="3" fill="#909090"/></svg>
<svg style="left:481px;top:98px" width="16" height="16" viewBox="0 0 16 16"><line x1="1" y1="15" x2="5" y2="0" stroke="#e00000" stroke-width="0.9" /><line x1="1" y1="15" x2="9" y2="0.5" stroke="#e00000" stroke-width="0.9" /><line x1="1" y1="15" x2="15" y2="1" stroke="#000" stroke-width="1" /><line x1="1" y1="15" x2="15.5" y2="6" stroke="#e00000" stroke-width="0.9" /><line x1="1" y1="15" x2="15.5" y2="10.5" stroke="#e00000" stroke-width="0.9" /><polygon points="0,16 0,13 3,16" fill="#e00000" stroke="none" stroke-width="1" /></svg>
<svg style="left:504px;top:98px" width="16" height="16" viewBox="0 0 16 16"><rect x="1.7" y="2.7" width="10.6" height="10.6" fill="#d8d0f8" stroke="#000" stroke-width="1.4" /><polygon points="2,13 5,3 8,3" fill="#ff8040" stroke="none" stroke-width="1" /><polygon points="2,13 8,3 12,3 12,5" fill="#ffe060" stroke="none" stroke-width="1" /><polygon points="2,13 12,5 12,9" fill="#ff6060" stroke="none" stroke-width="1" /><line x1="2" y1="13" x2="6" y2="0.5" stroke="#e00000" stroke-width="1" /><line x1="2" y1="13" x2="10.5" y2="0.5" stroke="#e00000" stroke-width="1" /><line x1="2" y1="13" x2="15" y2="1.5" stroke="#e00000" stroke-width="1" /><line x1="2" y1="13" x2="15.5" y2="5.5" stroke="#e00000" stroke-width="1" /><line x1="2" y1="13" x2="15.5" y2="9.5" stroke="#e00000" stroke-width="1" /><polygon points="1.5,13.5 1.5,9 6,13.5" fill="#a00000" stroke="none" stroke-width="1" /></svg>
<svg style="left:527px;top:98px" width="16" height="16" viewBox="0 0 16 16"><rect x="1.7" y="1.7" width="10.6" height="10.6" fill="#d8d0f8" stroke="#000" stroke-width="1.4" /><polygon points="2,2 7,2 12,9 12,12 9,12 2,7" fill="#f0a0a0" stroke="none" stroke-width="1" /><line x1="2" y1="2" x2="12" y2="12" stroke="#fff" stroke-width="1" /><line x1="2" y1="2" x2="15.5" y2="11" stroke="#e00000" stroke-width="0.9" /><line x1="2" y1="2" x2="12.5" y2="15.5" stroke="#e00000" stroke-width="0.9" /><line x1="2" y1="2" x2="8" y2="14" stroke="#e00000" stroke-width="0.9" /><line x1="2" y1="2" x2="14" y2="8" stroke="#e00000" stroke-width="0.9" /><polygon points="1.5,1.5 6,1.5 1.5,6" fill="#a00000" stroke="none" stroke-width="1" /><rect x="1.7" y="1.7" width="10.6" height="10.6" fill="none" stroke="#000" stroke-width="1.4" /></svg>
<svg style="left:550px;top:98px" width="16" height="16" viewBox="0 0 16 16"><line x1="0" y1="15.5" x2="15.5" y2="0.5" stroke="#000" stroke-width="1" /><line x1="0" y1="15.5" x2="15.5" y2="6.5" stroke="#000" stroke-width="1" /><line x1="0" y1="15.5" x2="15" y2="11" stroke="#000" stroke-width="1.1" /><polygon points="0,16 4,13 5,15" fill="#000" stroke="none" stroke-width="1" /></svg>
<svg style="left:573px;top:98px" width="16" height="16" viewBox="0 0 16 16"><polyline points="1,1 6.5,14.5 11,6.5 15,10.5" fill="none" stroke="#000" stroke-width="1.2" /><line x1="0" y1="15.5" x2="16" y2="15.5" stroke="#909090" stroke-dasharray="1 1"/></svg>
<svg style="left:596px;top:98px" width="16" height="16" viewBox="0 0 16 16" shape-rendering="crispEdges"><rect x="0" y="0" width="1" height="16" fill="#909090"/><rect x="0" y="0" width="16" height="1" fill="#909090"/><rect x="4" y="0" width="1" height="16" fill="#909090"/><rect x="0" y="4" width="16" height="1" fill="#909090"/><rect x="8" y="0" width="1" height="16" fill="#909090"/><rect x="0" y="8" width="16" height="1" fill="#909090"/><rect x="12" y="0" width="1" height="16" fill="#909090"/><rect x="0" y="12" width="16" height="1" fill="#909090"/><rect x="15" y="0" width="1" height="16" fill="#909090"/><rect x="0" y="15" width="16" height="1" fill="#909090"/><rect x="2" y="2" width="1" height="1" fill="#e04040"/><rect x="2" y="6" width="1" height="1" fill="#e04040"/><rect x="2" y="10" width="1" height="1" fill="#e04040"/><rect x="2" y="14" width="1" height="1" fill="#e04040"/><rect x="6" y="2" width="1" height="1" fill="#e04040"/><rect x="6" y="6" width="1" height="1" fill="#e04040"/><rect x="6" y="10" width="1" height="1" fill="#e04040"/><rect x="6" y="14" width="1" height="1" fill="#e04040"/><rect x="10" y="2" width="1" height="1" fill="#e04040"/><rect x="10" y="6" width="1" height="1" fill="#e04040"/><rect x="10" y="10" width="1" height="1" fill="#e04040"/><rect x="10" y="14" width="1" height="1" fill="#e04040"/><rect x="14" y="2" width="1" height="1" fill="#e04040"/><rect x="14" y="6" width="1" height="1" fill="#e04040"/><rect x="14" y="10" width="1" height="1" fill="#e04040"/><rect x="14" y="14" width="1" height="1" fill="#e04040"/><rect x="4" y="2" width="1" height="1" fill="#e07070"/><rect x="2" y="4" width="1" height="1" fill="#e07070"/><rect x="4" y="6" width="1" height="1" fill="#e07070"/><rect x="6" y="4" width="1" height="1" fill="#e07070"/><rect x="4" y="10" width="1" height="1" fill="#e07070"/><rect x="10" y="4" width="1" height="1" fill="#e07070"/><rect x="4" y="14" width="1" height="1" fill="#e07070"/><rect x="14" y="4" width="1" height="1" fill="#e07070"/><rect x="8" y="2" width="1" height="1" fill="#e07070"/><rect x="2" y="8" width="1" height="1" fill="#e07070"/><rect x="8" y="6" width="1" height="1" fill="#e07070"/><rect x="6" y="8" width="1" height="1" fill="#e07070"/><rect x="8" y="10" width="1" height="1" fill="#e07070"/><rect x="10" y="8" width="1" height="1" fill="#e07070"/><rect x="8" y="14" width="1" height="1" fill="#e07070"/><rect x="14" y="8" width="1" height="1" fill="#e07070"/><rect x="12" y="2" width="1" height="1" fill="#e07070"/><rect x="2" y="12" width="1" height="1" fill="#e07070"/><rect x="12" y="6" width="1" height="1" fill="#e07070"/><rect x="6" y="12" width="1" height="1" fill="#e07070"/><rect x="12" y="10" width="1" height="1" fill="#e07070"/><rect x="10" y="12" width="1" height="1" fill="#e07070"/><rect x="12" y="14" width="1" height="1" fill="#e07070"/><rect x="14" y="12" width="1" height="1" fill="#e07070"/></svg>
<svg style="left:619px;top:98px" width="16" height="16" viewBox="0 0 16 16"><g transform="translate(2,0) scale(0.85)"><rect x="0" y="0" width="1" height="16" fill="#909090"/><rect x="0" y="0" width="16" height="1" fill="#909090"/><rect x="4" y="0" width="1" height="16" fill="#909090"/><rect x="0" y="4" width="16" height="1" fill="#909090"/><rect x="8" y="0" width="1" height="16" fill="#909090"/><rect x="0" y="8" width="16" height="1" fill="#909090"/><rect x="12" y="0" width="1" height="16" fill="#909090"/><rect x="0" y="12" width="16" height="1" fill="#909090"/><rect x="15" y="0" width="1" height="16" fill="#909090"/><rect x="0" y="15" width="16" height="1" fill="#909090"/><rect x="2" y="2" width="1" height="1" fill="#e04040"/><rect x="2" y="6" width="1" height="1" fill="#e04040"/><rect x="2" y="10" width="1" height="1" fill="#e04040"/><rect x="2" y="14" width="1" height="1" fill="#e04040"/><rect x="6" y="2" width="1" height="1" fill="#e04040"/><rect x="6" y="6" width="1" height="1" fill="#e04040"/><rect x="6" y="10" width="1" height="1" fill="#e04040"/><rect x="6" y="14" width="1" height="1" fill="#e04040"/><rect x="10" y="2" width="1" height="1" fill="#e04040"/><rect x="10" y="6" width="1" height="1" fill="#e04040"/><rect x="10" y="10" width="1" height="1" fill="#e04040"/><rect x="10" y="14" width="1" height="1" fill="#e04040"/><rect x="14" y="2" width="1" height="1" fill="#e04040"/><rect x="14" y="6" width="1" height="1" fill="#e04040"/><rect x="14" y="10" width="1" height="1" fill="#e04040"/><rect x="14" y="14" width="1" height="1" fill="#e04040"/><rect x="4" y="2" width="1" height="1" fill="#e07070"/><rect x="2" y="4" width="1" height="1" fill="#e07070"/><rect x="4" y="6" width="1" height="1" fill="#e07070"/><rect x="6" y="4" width="1" height="1" fill="#e07070"/><rect x="4" y="10" width="1" height="1" fill="#e07070"/><rect x="10" y="4" width="1" height="1" fill="#e07070"/><rect x="4" y="14" width="1" height="1" fill="#e07070"/><rect x="14" y="4" width="1" height="1" fill="#e07070"/><rect x="8" y="2" width="1" height="1" fill="#e07070"/><rect x="2" y="8" width="1" height="1" fill="#e07070"/><rect x="8" y="6" width="1" height="1" fill="#e07070"/><rect x="6" y="8" width="1" height="1" fill="#e07070"/><rect x="8" y="10" width="1" height="1" fill="#e07070"/><rect x="10" y="8" width="1" height="1" fill="#e07070"/><rect x="8" y="14" width="1" height="1" fill="#e07070"/><rect x="14" y="8" width="1" height="1" fill="#e07070"/><rect x="12" y="2" width="1" height="1" fill="#e07070"/><rect x="2" y="12" width="1" height="1" fill="#e07070"/><rect x="12" y="6" width="1" height="1" fill="#e07070"/><rect x="6" y="12" width="1" height="1" fill="#e07070"/><rect x="12" y="10" width="1" height="1" fill="#e07070"/><rect x="10" y="12" width="1" height="1" fill="#e07070"/><rect x="12" y="14" width="1" height="1" fill="#e07070"/><rect x="14" y="12" width="1" height="1" fill="#e07070"/></g><rect x="1" y="1" width="1.3" height="14" fill="#000"/><rect x="1" y="14" width="14" height="1.3" fill="#000"/><polygon points="1.6,0 0,3 3.4,3" fill="#000" stroke="none" stroke-width="1" /><polygon points="16,14.6 13,13 13,16" fill="#000" stroke="none" stroke-width="1" /><line x1="9" y1="9" x2="15" y2="15" stroke="#000" stroke-width="1" /></svg>
<svg style="left:642px;top:98px" width="16" height="16" viewBox="0 0 16 16"><rect x="2" y="2" width="1" height="14" fill="#909090"/><rect x="12" y="0" width="1" height="14" fill="#909090"/><line x1="0" y1="8.5" x2="15.5" y2="1.5" stroke="#000" stroke-width="1.2" /><line x1="0" y1="12" x2="15.5" y2="5" stroke="#000" stroke-width="1.2" /><line x1="0" y1="15.5" x2="15.5" y2="8.5" stroke="#000" stroke-width="1.2" /></svg>
<div style="left:663px;top:93px;width:1px;height:25px;background:#808080;"></div>
<div style="left:664px;top:93px;width:1px;height:25px;background:#fff;"></div>
<div style="left:668px;top:96px;width:1px;height:20px;background:#fff;"></div>
<div style="left:669px;top:96px;width:1px;height:20px;background:#d4d0c8;"></div>
<div style="left:670px;top:96px;width:1px;height:20px;background:#808080;"></div>
<div style="left:668px;top:116px;width:3px;height:1px;background:#808080;"></div>
<svg style="left:675px;top:98px" width="16" height="16" viewBox="0 0 16 16"><rect x="1" y="0" width="1.6" height="16" fill="#000"/><rect x="3" y="1" width="10" height="1" fill="#000"/><rect x="3" y="4" width="10" height="1" fill="#000"/><rect x="3" y="7" width="10" height="1" fill="#000"/><rect x="3" y="10" width="10" height="1" fill="#000"/><rect x="3" y="13" width="10" height="1" fill="#000"/><rect x="13" y="1" width="2" height="1.3" fill="#000"/><polygon points="12,3 15,3 13.5,5" fill="#000" stroke="none" stroke-width="1" /><polygon points="12,12.5 15,12.5 13.5,10.5" fill="#000" stroke="none" stroke-width="1" /></svg>
<svg style="left:698px;top:98px" width="16" height="16" viewBox="0 0 16 16"><rect x="2" y="1" width="14" height="1.2" fill="#e00000"/><rect x="0" y="14.3" width="7" height="1.2" fill="#e00000"/><polyline points="3,14.5 9,1.5 15.5,7" fill="none" stroke="#000" stroke-width="1.2" /><text x="6.5" y="15" fill="#e00000" font-size="10.5" font-family="Liberation Sans,Noto Sans CJK SC,sans-serif" >%</text></svg>
<svg style="left:721px;top:98px" width="16" height="16" viewBox="0 0 16 16"><text x="0" y="13.5" fill="#000" font-size="16" font-family="Liberation Sans,Noto Sans CJK SC,sans-serif" textLength="14" lengthAdjust="spacingAndGlyphs">%</text></svg>
<svg style="left:744px;top:98px" width="16" height="16" viewBox="0 0 16 16"><rect x="0" y="1" width="16" height="1.4" fill="#000"/><rect x="0" y="14" width="16" height="1.4" fill="#000"/><rect x="8" y="5.3" width="8" height="1.3" fill="#000"/><rect x="10" y="9.6" width="6" height="1.3" fill="#000"/><text x="0" y="13.5" fill="#e00000" font-size="10.5" font-family="Liberation Sans,Noto Sans CJK SC,sans-serif" >%</text></svg>
<svg style="left:767px;top:98px" width="16" height="16" viewBox="0 0 16 16"><circle cx="8" cy="8" r="7.3" fill="#f0ecc0" stroke="#909090" stroke-width="1"/><text x="3.2" y="12" fill="#909000" font-size="9.5" font-family="Liberation Sans,Noto Sans CJK SC,sans-serif" font-weight="bold">金</text></svg>
<svg style="left:790px;top:98px" width="16" height="16" viewBox="0 0 16 16"><rect x="0" y="1" width="16" height="1.4" fill="#000"/><rect x="0" y="14" width="16" height="1.4" fill="#000"/><rect x="8" y="5.3" width="8" height="1.3" fill="#000"/><rect x="10" y="9.6" width="6" height="1.3" fill="#000"/><text x="0" y="13.5" fill="#a0a000" font-size="9.5" font-family="Liberation Sans,Noto Sans CJK SC,sans-serif" font-weight="bold">金</text></svg>
<svg style="left:813px;top:98px" width="16" height="16" viewBox="0 0 16 16"><rect x="2" y="0" width="1.4" height="16" fill="#000"/><rect x="0" y="3" width="5" height="1.2" fill="#000"/><rect x="0" y="7" width="5" height="1.2" fill="#000"/><rect x="0" y="11" width="5" height="1.2" fill="#000"/><rect x="0" y="14.8" width="5" height="1.2" fill="#000"/><g transform="translate(3,0) scale(0.85)"><g transform="translate(0,0)"><polygon points="5,11 9.5,3 14.5,6 10,13.5" fill="#a8d0d0" stroke="#000" stroke-width="0.8" /><polygon points="9.5,3 11,0.5 15.5,2.5 14.5,6" fill="#e00000" stroke="#800000" stroke-width="0.6" /><polygon points="5,11 10,13.5 4,15.5" fill="#e00000" stroke="#600000" stroke-width="0.6" /><line x1="7.5" y1="11.5" x2="11.5" y2="4.5" stroke="#fff" stroke-width="0.9" /></g></g></svg>
<svg style="left:836px;top:98px" width="16" height="16" viewBox="0 0 16 16"><rect x="0" y="1" width="16" height="1.2" fill="#e00000"/><rect x="0" y="14" width="16" height="1.2" fill="#e00000"/><rect x="0" y="7.4" width="16" height="1.1" fill="#000"/><path d="M0 13 C2 13 3 2.5 5.5 2.5 S8.5 13 10.5 13 S13.5 2.5 16 2.5" fill="none" stroke="#909090" stroke-width="1.1"/></svg>
<svg style="left:859px;top:98px" width="16" height="16" viewBox="0 0 16 16"><rect x="0" y="1" width="16" height="1.2" fill="#e00000"/><rect x="0" y="14" width="16" height="1.2" fill="#e00000"/><text x="3.2" y="12.5" fill="#a0a000" font-size="9.5" font-family="Liberation Sans,Noto Sans CJK SC,sans-serif" font-weight="bold">金</text></svg>
<svg style="left:882px;top:98px" width="16" height="16" viewBox="0 0 16 16"><line x1="0" y1="15.5" x2="15.5" y2="0.5" stroke="#000" stroke-width="1.1" /><rect x="7.5" y="8" width="8.5" height="1.1" fill="#000"/><rect x="4.5" y="11" width="11.5" height="1.1" fill="#000"/><rect x="1.5" y="14" width="14.5" height="1.2" fill="#000"/><text x="0" y="9" fill="#e00000" font-size="11" font-family="Liberation Sans,Noto Sans CJK SC,sans-serif" font-weight="bold">J</text></svg>
<svg style="left:905px;top:98px" width="16" height="16" viewBox="0 0 16 16"><line x1="0" y1="15.5" x2="15.5" y2="0.5" stroke="#000" stroke-width="1.1" /><rect x="7.5" y="8" width="8.5" height="1.1" fill="#000"/><rect x="4.5" y="11" width="11.5" height="1.1" fill="#000"/><rect x="1.5" y="14" width="14.5" height="1.2" fill="#000"/><text x="0" y="9" fill="#e00000" font-size="11" font-family="Liberation Sans,Noto Sans CJK SC,sans-serif" font-weight="bold">F</text></svg>
<svg style="left:928px;top:98px" width="16" height="16" viewBox="0 0 16 16"><line x1="0" y1="15.5" x2="15.5" y2="0.5" stroke="#000" stroke-width="1.1" /><rect x="7.5" y="8" width="8.5" height="1.1" fill="#000"/><rect x="4.5" y="11" width="11.5" height="1.1" fill="#000"/><rect x="1.5" y="14" width="14.5" height="1.2" fill="#000"/><text x="0" y="9.5" fill="#a0a000" font-size="10" font-family="Liberation Sans,Noto Sans CJK SC,sans-serif" font-weight="bold">金</text></svg>
<svg style="left:951px;top:98px" width="16" height="16" viewBox="0 0 16 16"><line x1="0" y1="15.5" x2="15.5" y2="0.5" stroke="#000" stroke-width="1.1" /><rect x="7.5" y="8" width="8.5" height="1.1" fill="#000"/><rect x="4.5" y="11" width="11.5" height="1.1" fill="#000"/><rect x="1.5" y="14" width="14.5" height="1.2" fill="#000"/><text x="0" y="10" fill="#e00000" font-size="10.5" font-family="Liberation Sans,Noto Sans CJK SC,sans-serif" >神</text></svg>
<svg style="left:974px;top:98px" width="16" height="16" viewBox="0 0 16 16"><line x1="0" y1="15.5" x2="15.5" y2="0.5" stroke="#000" stroke-width="1.1" /><rect x="7.5" y="8" width="8.5" height="1.1" fill="#000"/><rect x="4.5" y="11" width="11.5" height="1.1" fill="#000"/><rect x="1.5" y="14" width="14.5" height="1.2" fill="#000"/><text x="0" y="10" fill="#e00000" font-size="10.5" font-family="Liberation Sans,Noto Sans CJK SC,sans-serif" >赢</text></svg>
<svg style="left:997px;top:98px" width="16" height="16" viewBox="0 0 16 16"><line x1="0" y1="15.5" x2="15.5" y2="0.5" stroke="#000" stroke-width="1.1" /><rect x="7.5" y="8" width="8.5" height="1.1" fill="#000"/><rect x="4.5" y="11" width="11.5" height="1.1" fill="#000"/><rect x="1.5" y="14" width="14.5" height="1.2" fill="#000"/><text x="0" y="9.5" fill="#e00000" font-size="10" font-family="Liberation Sans,Noto Sans CJK SC,sans-serif" >四</text></svg>
<div style="left:1018px;top:93px;width:1px;height:25px;background:#808080;"></div>
<div style="left:1019px;top:93px;width:1px;height:25px;background:#fff;"></div>
<div style="left:1023px;top:96px;width:1px;height:20px;background:#fff;"></div>
<div style="left:1024px;top:96px;width:1px;height:20px;background:#d4d0c8;"></div>
<div style="left:1025px;top:96px;width:1px;height:20px;background:#808080;"></div>
<div style="left:1023px;top:116px;width:3px;height:1px;background:#808080;"></div>
<svg style="left:1030px;top:98px" width="16" height="16" viewBox="0 0 16 16"><rect x="0" y="0" width="16" height="16" fill="#fff"/><g transform="rotate(40 8 8)"><circle cx="8" cy="8" r="7.6" fill="#f00010" stroke="none" stroke-width="0"/><path d="M8 0.4 A7.6 7.6 0 0 1 8 15.6 A3.8 3.8 0 0 0 8 8 A3.8 3.8 0 0 1 8 0.4 Z" fill="#70b8ff"/><circle cx="8" cy="4.2" r="1.7" fill="#d01030" stroke="none" stroke-width="0"/><circle cx="8" cy="11.8" r="1.7" fill="#80b0e0" stroke="none" stroke-width="0"/></g></svg>
<svg style="left:1053px;top:98px" width="16" height="16" viewBox="0 0 16 16"><path d="M8 8 C6 4 1.5 4 1.5 8 S6 12 8 8" fill="none" stroke="#60b0f0" stroke-width="1.4"/><path d="M8 8 C10 12 14.5 12 14.5 8 S10 4 8 8" fill="none" stroke="#60b0f0" stroke-width="1.4"/><path d="M2 6 C4 2.5 6.5 4.5 8 8 S12.5 13.5 15 9.500" fill="none" stroke="#d81020" stroke-width="2.2"/></svg>
<div style="left:0px;top:119px;width:1358px;height:558px;background:#fff;"></div>
<div style="left:72px;top:132px;width:1286px;height:1px;background:#a8a8a8;"></div>
<div class="t" style="left:72px;top:121px;color:#a8a8a8;font-size:9.5px;letter-spacing:-0.4px;height:12px;line-height:12px">06-09</div>
<div class="t" style="left:131px;top:121px;color:#a8a8a8;font-size:9.5px;letter-spacing:-0.4px;height:12px;line-height:12px">08-14</div>
<div class="t" style="left:201px;top:121px;color:#a8a8a8;font-size:9.5px;letter-spacing:-0.4px;height:12px;line-height:12px">10-23</div>
<div class="t" style="left:271px;top:121px;color:#a8a8a8;font-size:9.5px;letter-spacing:-0.4px;height:12px;line-height:12px">01-01</div>
<div class="t" style="left:4px;top:127px;color:#0000c0;">周<span class="n" style="letter-spacing:-1.34px;margin:0 0.67px 0 -0.67px">K</span>线</div>
<div class="t" style="left:72px;top:134px;letter-spacing:0.5px;font-size:12.5px">极反通道</div>
<div class="t" style="left:141px;top:133px;color:#c00020;font-size:11px">Tp=-1.0000</div>
<div class="t" style="left:219px;top:133px;color:#000090;font-size:11px">Up=-1.0000</div>
<div class="t" style="left:298px;top:133px;color:#000;font-size:11px">Md=-1.0000</div>
<div class="t" style="left:377px;top:133px;color:#000090;font-size:11px">Dn=-1.0000</div>
<div class="t" style="left:456px;top:133px;color:#c00020;font-size:11px">Bt=-1.0000</div>
<div class="t" style="left:1258px;top:134px;color:#000090;font-size:11px;letter-spacing:0.9px">301320</div>
<div class="t" style="left:1308px;top:134px;color:#000080;letter-spacing:1px">豪江智能</div>
<svg style="left:0;top:119px" width="1358" height="558" viewBox="0 119 1358 558" shape-rendering="crispEdges"><line x1="72" y1="597.5" x2="1358" y2="597.5" stroke="#a0a0a0" stroke-dasharray="3 3"/><line x1="72" y1="617.5" x2="1358" y2="617.5" stroke="#a0a0a0" stroke-dasharray="3 3"/><line x1="72" y1="637.5" x2="1358" y2="637.5" stroke="#a0a0a0" stroke-dasharray="3 3"/><line x1="72" y1="657.5" x2="1358" y2="657.5" stroke="#a0a0a0" stroke-dasharray="3 3"/><line x1="141" y1="577.5" x2="350" y2="577.5" stroke="#808080" stroke-dasharray="6 1"/><rect x="74" y="163" width="1" height="171" fill="#c8202c"/><rect x="74" y="382" width="1" height="9" fill="#c8202c"/><rect x="71.5" y="334.5" width="5" height="47" fill="#fff" stroke="#c8202c"/><rect x="81" y="173" width="1" height="178" fill="#c8202c"/><rect x="81" y="471" width="1" height="43" fill="#c8202c"/><rect x="78.5" y="351.5" width="5" height="119" fill="#fff" stroke="#c8202c"/><rect x="88" y="150" width="1" height="175" fill="#c8202c"/><rect x="85.5" y="325.5" width="5" height="29" fill="#fff" stroke="#c8202c"/><rect x="95" y="356" width="1" height="152" fill="#0a8014"/><rect x="92" y="367" width="6" height="30" fill="#0a8014"/><rect x="102" y="394" width="1" height="133" fill="#0a8014"/><rect x="99" y="416" width="6" height="98" fill="#0a8014"/><rect x="109" y="503" width="1" height="54" fill="#0a8014"/><rect x="106" y="505" width="6" height="22" fill="#0a8014"/><rect x="116" y="450" width="1" height="46" fill="#c8202c"/><rect x="116" y="514" width="1" height="40" fill="#c8202c"/><rect x="113.5" y="496.5" width="5" height="17" fill="#fff" stroke="#c8202c"/><rect x="123" y="483" width="1" height="17" fill="#c8202c"/><rect x="123" y="520" width="1" height="42" fill="#c8202c"/><rect x="120.5" y="500.5" width="5" height="19" fill="#fff" stroke="#c8202c"/><rect x="130" y="505" width="1" height="62" fill="#0a8014"/><rect x="127" y="505" width="6" height="62" fill="#0a8014"/><rect x="137" y="564" width="1" height="34" fill="#0a8014"/><rect x="134" y="567" width="6" height="10" fill="#0a8014"/><rect x="71.5" y="658.5" width="5" height="18" fill="#fff" stroke="#c8202c"/><rect x="78.5" y="597.5" width="5" height="79" fill="#fff" stroke="#c8202c"/><rect x="85.5" y="636.5" width="5" height="40" fill="#fff" stroke="#c8202c"/><rect x="92" y="642" width="6" height="35" fill="#0a8014"/><rect x="99" y="656" width="6" height="21" fill="#0a8014"/><rect x="106" y="662" width="6" height="15" fill="#0a8014"/><rect x="113.5" y="650.5" width="5" height="26" fill="#fff" stroke="#c8202c"/><rect x="120.5" y="656.5" width="5" height="20" fill="#fff" stroke="#c8202c"/><rect x="127" y="662" width="6" height="15" fill="#0a8014"/><rect x="134" y="675" width="6" height="2" fill="#0a8014"/><polyline points="88.5,150.5 106,157" fill="none" stroke="#000090" shape-rendering="auto"/><polyline points="137.5,597 157,591.5" fill="none" stroke="#000090" shape-rendering="auto"/></svg>
<div class="t" style="left:108px;top:155px;color:#000090;font-size:11px;letter-spacing:0.8px">30.2800</div>
<div class="t" style="left:158px;top:584px;color:#000090;font-size:11px;letter-spacing:0.8px">20.1000</div>
<div class="t" style="left:26px;top:584px;color:#404040;"><span class="d">20</span><span class="s">.</span><span class="d">1000</span></div>
<div class="t" style="left:32px;top:610px;color:#404040;font-size:11px">998731</div>
<div class="t" style="left:32px;top:630px;color:#404040;font-size:11px">665821</div>
<div class="t" style="left:32px;top:650px;color:#404040;font-size:11px">332910</div>
<div style="left:0;top:660px;width:25px;height:16px;background:#d4d0c8;border:1px solid;border-color:#fff #404040 #404040 #fff;box-shadow:inset -1px -1px 0 #808080"><svg style="left:6px;top:2px" width="11" height="10" viewBox="0 0 11 10"><path d="M5.5 1 L10 9 H1 Z" fill="none" stroke="#000" stroke-width="1"/></svg></div>
<div style="left:1336px;top:661px;width:24px;height:16px;background:#d4d0c8;border-right:2px solid #606060;border-bottom:1px solid #808080"><svg style="left:5px;top:3px" width="12" height="7" viewBox="0 0 12 7"><path d="M0 3.5H11M8 1l3 2.5L8 6z" fill="#000" stroke="#000" stroke-width="1"/></svg></div>
<div style="left:0px;top:677px;width:1360px;height:2px;background:#707070;"></div>
<div style="left:0px;top:679px;width:1360px;height:1px;background:#a8a8a8;"></div>
<div style="left:0px;top:680px;width:1360px;height:1px;background:#f0f0f0;"></div>
<div style="left:1px;top:681px;width:1207px;height:1px;background:#808080;"></div>
<div style="left:1px;top:682px;width:1207px;height:1px;background:#404040;"></div>
<div style="left:1px;top:681px;width:1px;height:18px;background:#808080;"></div>
<div style="left:2px;top:682px;width:1px;height:17px;background:#404040;"></div>
<svg style="left:4px;top:683px" width="16" height="16" viewBox="0 0 16 16" shape-rendering="crispEdges"><rect x="0.5" y="1.5" width="15" height="12" fill="#fff" stroke="#000" stroke-width="1" /><rect x="1" y="2" width="14" height="2" fill="#0000c0"/><rect x="1" y="2" width="1" height="1" fill="#fff"/><rect x="14" y="2" width="1" height="1" fill="#fff"/><rect x="2" y="5" width="2" height="1" fill="#000"/><rect x="5" y="5" width="2" height="1" fill="#000"/><rect x="8" y="5" width="2" height="1" fill="#000"/><rect x="11" y="5" width="3" height="1" fill="#000"/><rect x="2" y="7" width="2" height="1" fill="#000"/><rect x="5" y="7" width="2" height="1" fill="#000"/><rect x="8" y="7" width="2" height="1" fill="#000"/><rect x="11" y="7" width="3" height="1" fill="#000"/><rect x="2" y="9" width="2" height="1" fill="#000"/><rect x="5" y="9" width="2" height="1" fill="#000"/><rect x="8" y="9" width="2" height="1" fill="#000"/><rect x="11" y="9" width="3" height="1" fill="#000"/><rect x="2" y="11" width="2" height="1" fill="#000"/><rect x="5" y="11" width="2" height="1" fill="#000"/><rect x="8" y="11" width="2" height="1" fill="#000"/><rect x="11" y="11" width="3" height="1" fill="#000"/></svg>
<svg style="left:22px;top:681px" width="17" height="17" viewBox="0 0 17 17"><circle cx="8.5" cy="8.5" r="8" fill="#f01800" stroke="#f04030" stroke-width="1" stroke-dasharray="1 1"/><text x="2.5" y="13" font-size="12" fill="#ffe860" font-family="Liberation Sans,Noto Sans CJK SC,sans-serif">沪</text></svg>
<svg style="left:252px;top:681px" width="17" height="17" viewBox="0 0 17 17"><circle cx="8.5" cy="8.5" r="8" fill="#f01800" stroke="#f04030" stroke-width="1" stroke-dasharray="1 1"/><text x="2.5" y="13" font-size="12" fill="#ffe860" font-family="Liberation Sans,Noto Sans CJK SC,sans-serif">深</text></svg>
<div class="t" style="left:42px;top:684px;color:#189028;font-size:12px;letter-spacing:0.5px">3268.83</div>
<svg style="left:92px;top:686px" width="11" height="9" viewBox="0 0 11 9"><path d="M0 0h11l-5.500 9z" fill="#108020"/></svg>
<div class="t" style="left:105px;top:684px;color:#189028;font-size:12px;letter-spacing:0.5px">-19.25</div>
<div class="t" style="left:146px;top:684px;color:#189028;font-size:12px;letter-spacing:0.5px">-0.59%</div>
<div class="t" style="left:192px;top:684px;color:#189028;font-size:12px;letter-spacing:0.5px">3930.57</div>
<div class="t" style="left:237px;top:685px;color:#800000;">亿</div>
<div class="t" style="left:272px;top:684px;color:#189028;font-size:12px;letter-spacing:0.5px">11145.03</div>
<svg style="left:330px;top:686px" width="11" height="9" viewBox="0 0 11 9"><path d="M0 0h11l-5.500 9z" fill="#108020"/></svg>
<div class="t" style="left:342px;top:684px;color:#189028;font-size:12px;letter-spacing:0.5px">-93.03</div>
<div class="t" style="left:384px;top:684px;color:#189028;font-size:12px;letter-spacing:0.5px">-0.83%</div>
<div class="t" style="left:429px;top:684px;color:#189028;font-size:12px;letter-spacing:0.5px">4970.2</div>
<div style="left:469px;top:683px;width:1px;height:15px;background:#fff;"></div>
<div style="left:470px;top:683px;width:723px;height:15px;background:#d4d0c8;border:1px solid #404040;border-top:none;border-left-width:2px"></div>
<div style="left:472px;top:683px;width:13px;height:14px;background:#e8e6e0;border-right:1px solid #404040"><svg style="left:4px;top:3px" width="4" height="7" viewBox="0 0 4 7"><path d="M4 0v7l-4-3.5z" fill="#000"/></svg></div>
<div style="left:485px;top:683px;width:684px;height:14px;background:#d4d0c8;border-top:1px solid #fff;border-left:1px solid #fff;border-right:1px solid #404040;border-bottom:1px solid #808080"></div>
<div class="chk" style="left:1169px;top:683px;width:10px;height:14px;border:none"></div>
<div style="left:1179px;top:683px;width:13px;height:14px;background:#e8e6e0;border-left:1px solid #404040"><svg style="left:5px;top:3px" width="4" height="7" viewBox="0 0 4 7"><path d="M0 0v7l4-3.5z" fill="#000"/></svg></div>
<div style="left:470px;top:698px;width:890px;height:1px;background:#fff;"></div>
<div style="left:1208px;top:681px;width:1px;height:18px;background:#fff;"></div>
<svg style="left:1211px;top:682px" width="14" height="17" viewBox="0 0 14 17"><path d="M7 6 L3 15.5 H11 Z M4.5 12h5 M5.5 9.5h3" fill="none" stroke="#0000c0" stroke-width="1.2"/><rect x="1" y="15" width="12" height="1.5" fill="#0000c0"/><circle cx="7" cy="5" r="1.3" fill="#e00000"/><path d="M3.5 1.5 Q1.5 5 3.5 8.5 M10.5 1.5 Q12.500 5 10.5 8.5 M5 3 Q4 5 5 7 M9 3 Q10 5 9 7" fill="none" stroke="#e00000" stroke-width="0.9"/></svg>
<div class="t" style="left:1228px;top:684px;font-size:12px"><span>收</span><span style="font-size:13px;letter-spacing:0.6px">301319</span><span>分笔</span></div>
<div style="left:0px;top:699px;width:1360px;height:2px;background:#fff;"></div>
<div style="left:0px;top:701px;width:1360px;height:2px;background:#707070;"></div>
<div style="left:0px;top:703px;width:1360px;height:1px;background:#fff;"></div>
<div style="left:0px;top:703px;width:1px;height:20px;background:#606060;"></div>
<div style="left:1px;top:703px;width:1px;height:19px;background:#fff;"></div>
<div style="left:4px;top:705px;width:2px;height:15px;background:#fff;"></div>
<div style="left:6px;top:705px;width:1px;height:15px;background:#808080;"></div>
<div style="left:4px;top:719px;width:3px;height:1px;background:#808080;"></div>
<div class="sunk" style="left:11px;top:706px;width:1342px;height:16px"></div>
<div class="t" style="left:12px;top:709px;color:#000;"><span class="s">[</span>正月廿四<span class="s">]</span><span class="s"> </span>时间<span class="s">:</span><span class="d">20240304</span><span class="s"> </span>开<span class="s">:</span><span class="d">20</span><span class="s">.</span><span class="d">5600</span><span class="s"> </span>高<span class="s">:</span><span class="d">20</span><span class="s">.</span><span class="d">5621</span><span class="s"> </span>低<span class="s">:</span><span class="d">20</span><span class="s">.</span><span class="d">5579</span><span class="s"> </span>收<span class="s">:</span><span class="d">20</span><span class="s">.</span><span class="d">5600</span><span class="s"> </span>手<span class="s">:</span><span class="d">0</span><span class="s"> </span>额<span class="s">:</span><span class="d">0</span><span class="s">.</span><span class="d">00</span><span class="s"> </span>换<span class="s">:</span><span class="d">0</span><span class="s">.</span><span class="d">00</span><span class="s"> </span>张<span class="s">:</span><span class="d">0</span><span class="s">.</span><span class="d">00</span><span class="s"> </span>盘<span class="s">:</span><span class="d">0</span><span class="s"> </span>标<span class="s">:</span><span class="d">27</span><span class="s">.</span><span class="d">8432</span></div>
<div style="left:0px;top:722px;width:1360px;height:1px;background:#606060;"></div>
<div style="left:0px;top:723px;width:1360px;height:2px;background:#fff;"></div>
<div style="left:1358px;top:703px;width:1px;height:19px;background:#fff;"></div>
<div style="left:1358px;top:681px;width:1px;height:18px;background:#fff;"></div>
</body></html>
